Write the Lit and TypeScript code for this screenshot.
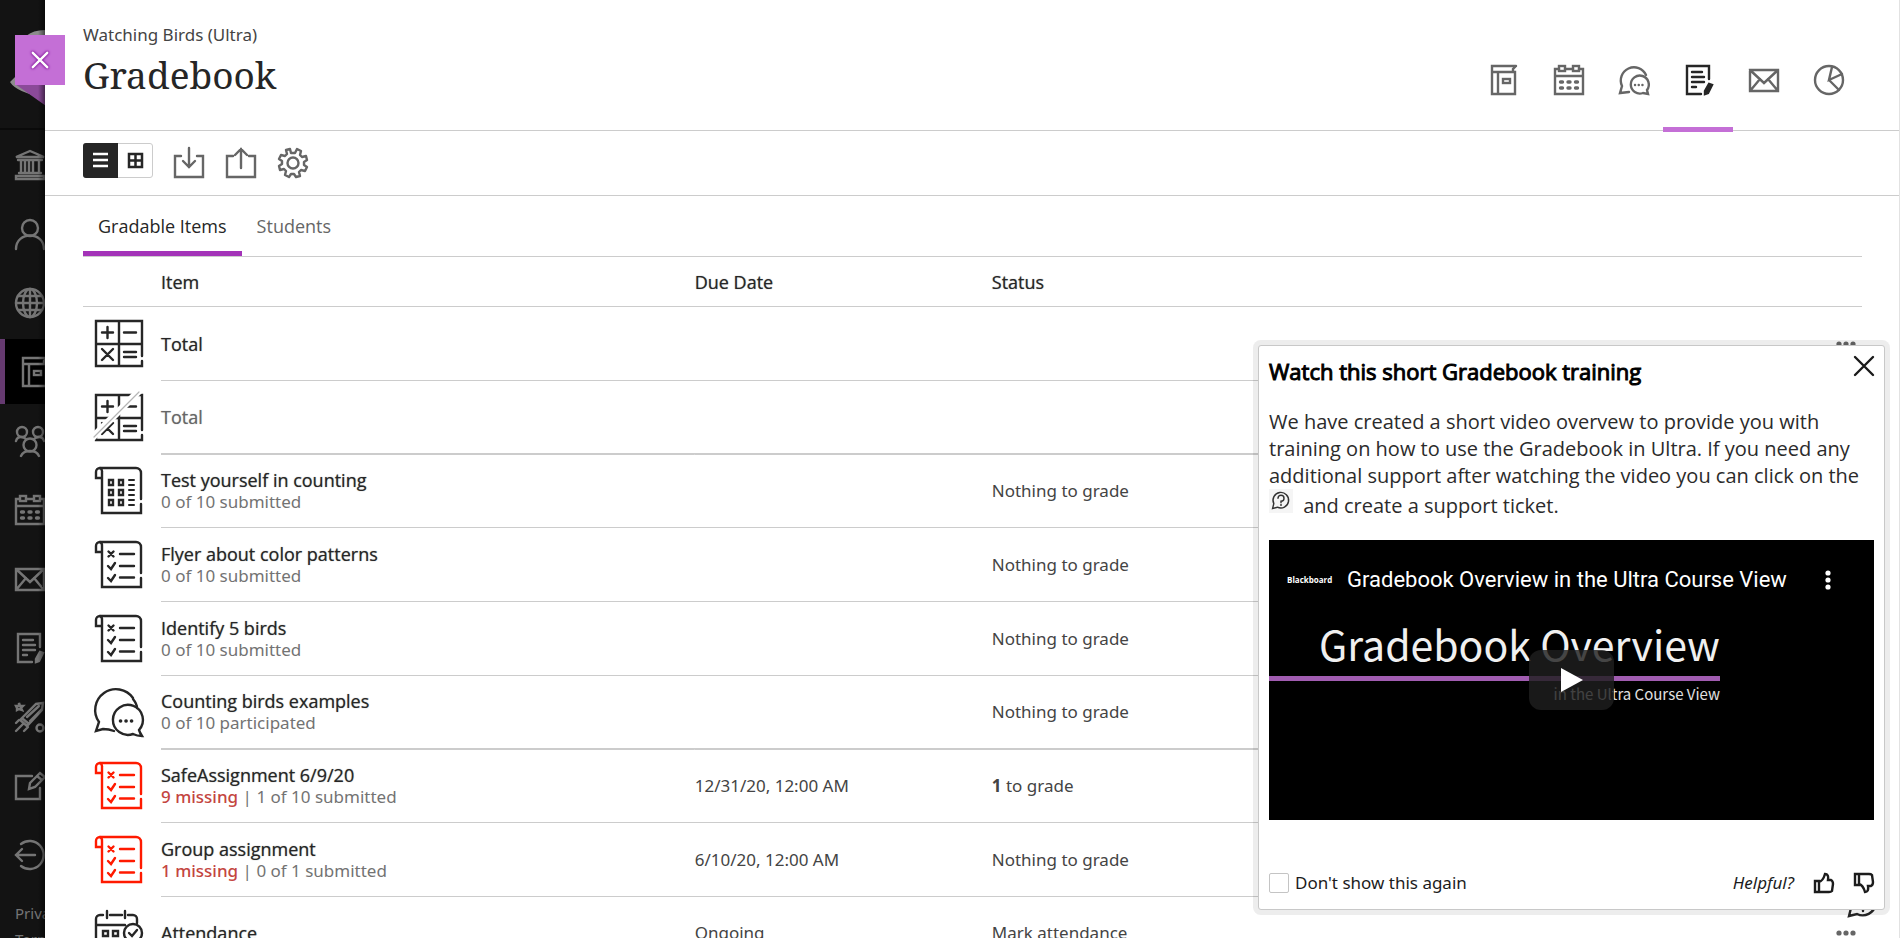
import { LitElement, html, css, svg, nothing, TemplateResult } from 'lit';
import { customElement, state } from 'lit/decorators.js';
import { classMap } from 'lit/directives/class-map.js';

const bookGlyph = svg`<path d="M27 1H3V29H26V7H3M9 7V29M27 1L24 4V6"/><rect x="14" y="14" width="7" height="4"/>`;
const calendarGlyph = svg`<path d="M5 4H1V29H29V4H25M11 4H19M1 11H29"/><rect x="5" y="1" width="6" height="5"/><rect x="19" y="1" width="6" height="5"/><path stroke-width="3.400" d="M6.500 17H8.500M14 17H16M21.500 17H23.500M6.500 23H8.500M14 23H16M21.500 23H23.500"/>`;
const chatGlyph = svg`<path d="M27 10A13 13 0 1 0 3 21L1 28L10 27"/><path d="M28 25A9 9 0 1 0 24 28L29 29Z"/><path stroke-width="2.400" d="M16 20H16.100M19.700 20H19.800M23.400 20H23.500"/>`;
const gradesGlyph = svg`<path d="M25 14V1H3V29H17"/><path d="M8 7H18M8 12H20M8 17H20M8 22H12"/><path fill="currentColor" d="M25 19L28 20L24 28L21 29V26Z"/>`;
const mailGlyph = svg`<path d="M1 5H29V26H1ZM1 5L15 18L29 5M1 26L11 14M29 26L19 14"/>`;
const pieGlyph = svg`<circle cx="15" cy="15" r="14"/><path d="M18 2L15 15L28 9M15 15L25 25"/>`;

const scrollFrame = svg`<path d="M6 11H1V5A4 4 0 0 1 5 1H41A5 5 0 0 1 46 6V32M46 37V46H7V5A4 4 0 0 0 5 1"/>`;

const glyphs: Record<string, [number, unknown]> = {
  book: [30, bookGlyph],
  calendar: [30, calendarGlyph],
  chat: [30, chatGlyph],
  grades: [30, gradesGlyph],
  mail: [30, mailGlyph],
  pie: [30, pieGlyph],
  bank: [30, svg`<path d="M1 7L15 1L29 7ZM3 10H27M1 26H29V29H1ZM4 23H26"/><path d="M6 11V22M10 11V22M14 11V22M18 11V22M24 11V22"/>`],
  person: [30, svg`<circle cx="15" cy="9" r="8"/><path d="M1 30C1 12 29 12 29 30"/>`],
  globe: [30, svg`<circle cx="15" cy="15" r="14"/><ellipse cx="15" cy="15" rx="7" ry="14"/><path d="M15 1V29M1 15H29M3 8H27M3 22H27"/>`],
  groups: [30, svg`<circle cx="7" cy="6" r="5"/><circle cx="23" cy="6" r="5"/><circle cx="15" cy="19" r="6.500"/><path d="M1 15Q2 11 6 11Q9 11 11 13M29 15Q28 11 24 11Q21 11 19 13M6 30Q8 25 15 25Q22 25 24 30"/>`],
  tools: [30, svg`<path d="M5 18L21 2L28 1L27 8L12 24ZM8 17L14 22M12 15L24 4M15 19L27 7M1 21L4 18M1 29L8 22M9 29L13 25"/><circle cx="25" cy="26" r="3.500"/><path d="M4 1L5 4L8 4L6 6L7 8L4 7L2 8L2 6L1 4L4 4Z"/>`],
  compose: [30, svg`<path d="M17 5H1V28H25V17"/><path d="M14 18L15 12L25 2L30 6L20 16ZM22 5L27 9"/>`],
  signout: [30, svg`<path d="M6 4A14 14 0 1 1 6 26M20 15H1M7 9L1 15L7 21"/>`],
  import: [30, svg`<path d="M7 8H1V29H29V8H23M15 0V18M9 13L15 19L21 13"/>`],
  export: [30, svg`<path d="M7 8H1V29H29V8H23M15 20V1M9 7L15 1L21 7"/>`],
  gear: [30, svg`<circle cx="15" cy="15" r="5.500"/><path stroke-linejoin="round" d="M12 1L13 5L17 5L19 1L23 3L22 7L24 9L28 8L29 12L26 14L26 17L29 19L27 23L23 22L21 24L22 28L18 29L16 26L13 26L11 29L7 27L8 23L6 21L2 22L1 18L4 16L4 13L1 11L3 7L7 8L9 6L8 2Z"/>`],
  list: [16, svg`<path stroke-linecap="butt" stroke-width="2.500" d="M0 2H15M0 8H15M0 14H15"/>`],
  grid: [16, svg`<path stroke-width="2.500" d="M2 2H15V15H2ZM8.500 2V15M2 8.500H15"/>`],
  cross: [20, svg`<path d="M1 1L19 19M19 1L1 19"/>`],
  calc: [48, svg`<path d="M47 36V1H1V46H47V41M24 1V46M1 24H47"/><path d="M7 12.500H18M12.500 7V18M29 12.500H41M7 29L18 40M18 29L7 40M29 32H41M29 37H41"/>`],
  calcOff: [48, svg`<path d="M47 36V1H1V46H47V41M24 1V46M1 24H47"/><path d="M7 12.500H18M12.500 7V18M29 12.500H41M7 29L18 40M18 29L7 40M29 32H41M29 37H41"/><path stroke="#fff" stroke-width="7" d="M-2 43L44 -3"/><path stroke="#b5b5b5" stroke-width="1.200" d="M-1 43L44 -2"/>`],
  quiz: [48, svg`${scrollFrame}<path d="M14 13H18V18H14ZM24 13H28V18H24ZM14 23H18V28H14ZM24 23H28V28H24ZM14 33H18V38H14ZM24 33H28V38H24Z"/><path stroke-width="2" d="M34 13H39M34 18H39M34 23H39M34 28H39M34 33H39M34 38H39"/>`],
  assignment: [48, svg`${scrollFrame}<path d="M13.500 10.500L18.500 15.500M18.500 10.500L13.500 15.500M13 25L16 28L20 22M13 37L16 40L20 34M25 13H39M25 25H39M25 36.500H39"/>`],
  discussion: [48, svg`<path d="M38 9A20.500 20.500 0 1 0 4 33L1 42L8 40Q14 40 19 42M38 10Q42 15 42 19"/><path d="M44 41A15 15 0 1 0 38 45Q42 47 47 47Q45 44 44 41"/><path stroke-width="3.600" d="M25.500 32H25.600M31 32H31.100M36.500 32H36.600"/>`],
  attendance: [48, svg`<path d="M8 5H5A4 4 0 0 0 1 9V47H42V40M15 5H27M33 5H38A4 4 0 0 1 42 9V13M12 1V8M30 1V8M1 15H30"/><path d="M8 21H13V26H8ZM18 21H23V26H18ZM8 32H13V37H8ZM18 32H23V37H18Z"/><circle cx="38" cy="23" r="9"/><path d="M34 23L37 26L42 20"/>`],
  dots: [20, svg`<g fill="currentColor" stroke="none"><circle cx="3" cy="10" r="2.600"/><circle cx="10" cy="10" r="2.600"/><circle cx="17" cy="10" r="2.600"/></g>`],
  kebab: [20, svg`<g fill="currentColor" stroke="none"><circle cx="10" cy="3" r="2.600"/><circle cx="10" cy="10" r="2.600"/><circle cx="10" cy="17" r="2.600"/></g>`],
  help: [30, svg`<path d="M3 21A13 13 0 1 1 9 27L1 29Z"/><path d="M10 12A5 5 0 1 1 15 17V19M15 22V24"/>`],
  thumbUp: [20, svg`<path d="M1 8H5V19H1ZM5 9Q9 8 11 1Q15 1 14 7H17Q19 8 19 11L18 18Q17 19 15 19H5"/>`],
  thumbDown: [20, svg`<path d="M1 12H5V1H1ZM5 11Q9 12 11 19Q15 19 14 13H17Q19 12 19 9L18 2Q17 1 15 1H5"/>`],
};

function icon(name: string, size = 30): TemplateResult {
  const [box, body] = glyphs[name];
  return html`<svg class="icon" width=${size} height=${size} viewBox="0 0 ${box} ${box}" fill="none"
    stroke="currentColor" stroke-width="2.400" stroke-linecap="round" aria-hidden="true">${body}</svg>`;
}

const shared = css`
  :host { display: block; font-family: "Noto Sans", "Open Sans", sans-serif; color: #262626; }
  *, *::before, *::after { box-sizing: border-box; }
  button { margin: 0; padding: 0; border: 0; background: none; font: inherit; color: inherit; cursor: pointer; }
  a { color: inherit; text-decoration: none; }
  svg { display: block; flex: none; overflow: visible; }
`;

@customElement('side-rail')
class SideRail extends LitElement {
  static styles = [shared, css`
    :host { background: #131313; color: #757575; overflow: hidden; position: relative; }
    .shade { position: absolute; top: 0; right: 0; bottom: 0; width: 7px; background: linear-gradient(90deg, transparent, rgba(0, 0, 0, .5)); }
    .brand { height: 130px; border-bottom: 2px solid #0a0a0a; }
    .nav { display: flex; flex-direction: column; gap: 4px; padding-top: 2px; }
    .link { height: 65px; display: flex; align-items: center; padding-left: 15px; }
    .link.active { background: #000; border-left: 5px solid #653a70; }
    .legal { display: flex; flex-direction: column; padding: 13px 0 0 15px; font-size: 15px; line-height: 26px; white-space: nowrap; }
  `];
  render() {
    const links: [string, string][] = [
      ['bank', 'Institution Page'], ['person', 'Profile'], ['globe', 'Activity Stream'], ['book', 'Courses'],
      ['groups', 'Organizations'], ['calendar', 'Calendar'], ['mail', 'Messages'], ['grades', 'Grades'],
      ['tools', 'Tools'], ['compose', 'Admin'], ['signout', 'Sign Out'],
    ];
    return html`
      <div class="brand">
        <svg width="60" height="128" viewBox="0 0 60 128" aria-hidden="true">
          <path fill="#8c8c8c" d="M26 36Q33 30 45 30H60V100Q18 95 10 82L16 76Z"/>
          <path fill="#8b4a99" d="M15 84H60V116Z"/>
        </svg>
      </div>
      <nav class="nav">
        ${links.map(([g, label]) => html`<a href="#" aria-label=${label} class=${classMap({ link: true, active: g === 'book' })}>${icon(g)}</a>`)}
      </nav>
      <div class="legal"><a href="#">Privacy</a><a href="#">Terms</a></div>
      <div class="shade"></div>`;
  }
}

interface Item { icon: string; title: string; missing?: number; detail?: string; due?: string; count?: number; status?: string; muted?: boolean; late?: boolean; }

const groups: Item[][] = [
  [{ icon: 'calc', title: 'Total' }, { icon: 'calcOff', title: 'Total', muted: true }],
  [
    { icon: 'quiz', title: 'Test yourself in counting', detail: '0 of 10 submitted', status: 'Nothing to grade' },
    { icon: 'assignment', title: 'Flyer about color patterns', detail: '0 of 10 submitted', status: 'Nothing to grade' },
    { icon: 'assignment', title: 'Identify 5 birds', detail: '0 of 10 submitted', status: 'Nothing to grade' },
    { icon: 'discussion', title: 'Counting birds examples', detail: '0 of 10 participated', status: 'Nothing to grade' },
  ],
  [
    { icon: 'assignment', title: 'SafeAssignment 6/9/20', missing: 9, detail: '1 of 10 submitted', due: '12/31/20, 12:00 AM', count: 1, status: 'to grade', late: true },
    { icon: 'assignment', title: 'Group assignment', missing: 1, detail: '0 of 1 submitted', due: '6/10/20, 12:00 AM', status: 'Nothing to grade', late: true },
    { icon: 'attendance', title: 'Attendance', due: 'Ongoing', status: 'Mark attendance' },
  ],
];

@customElement('item-table')
class ItemTable extends LitElement {
  static styles = [shared, css`
    table { width: 100%; border-collapse: separate; border-spacing: 0; table-layout: fixed; font-size: 17px; line-height: 22px; }
    .c-icon { width: 78px; }
    .c-item { width: 30%; }
    .c-due { width: 16.7%; }
    .c-menu { width: 60px; }
    th, .title { font-family: "Open Sans", sans-serif; font-size: 18px; font-weight: 400; text-shadow: 0 0 1px rgba(38, 38, 38, .6); color: #262626; }
    th { height: 50px; padding: 0; text-align: left; border-bottom: 1px solid #ccc; }
    td { height: 74px; padding: 0; vertical-align: middle; border-bottom: 1px solid #ccc; color: #444; }
    td.pic { border-bottom: 0; padding-left: 12px; color: #262626; }
    tr:last-child td { height: 73px; }
    tbody + tbody tr:first-child td:not(.pic) { background: linear-gradient(#ccc, #ccc) top / 100% 1px no-repeat; }
    .late { color: #ff1a00; }
    .title.muted { color: #666; text-shadow: 0 0 1px rgba(102, 102, 102, .6); }
    .detail { color: #737373; }
    .missing { font-weight: 500; color: #c4453f; }
    .menu { text-align: right; }
    .more { padding: 8px 6px; color: #666; }
  `];
  render() {
    return html`<table>
      <colgroup><col class="c-icon"><col class="c-item"><col class="c-due"><col><col class="c-menu"></colgroup>
      <thead><tr><th></th><th scope="col">Item</th><th scope="col">Due Date</th><th scope="col">Status</th><th></th></tr></thead>
      ${groups.map(g => html`<tbody>${g.map(i => html`<tr>
        <td class="pic"><span class=${classMap({ late: !!i.late })}>${icon(i.icon, 48)}</span></td>
        <td>
          <div class=${classMap({ title: true, muted: !!i.muted })}>${i.title}</div>
          ${i.detail ? html`<div class="detail">${i.missing ? html`<span class="missing">${i.missing} missing</span> | ` : nothing}${i.detail}</div>` : nothing}
        </td>
        <td>${i.due ?? nothing}</td>
        <td>${i.count ? html`<b>${i.count}</b> ` : nothing}${i.status ?? nothing}</td>
        <td class="menu"><button class="more" aria-label="More options for ${i.title}">${icon('dots', 20)}</button></td>
      </tr>`)}</tbody>`)}
    </table>`;
  }
}

@customElement('training-popover')
class TrainingPopover extends LitElement {
  static styles = [shared, css`
    :host { background: #fff; border: 1px solid #c8c8c8; border-radius: 3px; box-shadow: 0 0 0 5px rgba(0, 0, 0, .07); padding: 10px 10px 12px; color: #000; font-family: "Open Sans", sans-serif; }
    .head { display: flex; justify-content: space-between; align-items: flex-start; }
    h2 { margin: 0; font-size: 22px; line-height: 30px; font-weight: 400; -webkit-text-stroke: 1px #000; }
    .close { color: #1a1a1a; }
    .copy { margin: 22px 0 0; font-size: 20px; line-height: 27px; color: #2b2b2b; }
    .helpicon { display: inline-block; background: #f5f5f5; width: 24px; height: 24px; padding: 2px 3px; margin-right: 5px; color: #333; }
    .video { position: relative; margin-top: 21px; height: 280px; background: #000; color: #fff; overflow: hidden; }
    .bar { display: flex; align-items: center; padding: 26px 36px 0 18px; gap: 16px; font-family: Roboto, sans-serif; font-size: 22px; line-height: 28px; color: #fff; }
    .logo { font-family: "Open Sans", sans-serif; font-size: 8px; font-weight: 700; width: 44px; white-space: nowrap; }
    .name { flex: 1; white-space: nowrap; }
    .slide { width: 451px; text-align: right; font-family: "Noto Sans CJK SC", sans-serif; color: #f0f0f0; }
    .big { font-size: 41px; line-height: 60px; padding: 19px 0 3px; border-bottom: 5px solid #a05cb0; }
    .small { font-size: 15px; line-height: 26px; color: #e0e0e0; }
    .play { position: absolute; left: 260px; top: 110px; width: 85px; height: 60px; border-radius: 12px; background: rgba(30, 30, 30, .82); display: flex; align-items: center; justify-content: center; }
    .foot { display: flex; align-items: center; margin-top: 49px; font-family: "Noto Sans", sans-serif; font-size: 17px; line-height: 28px; color: #1c1c1c; }
    .check { display: flex; align-items: center; gap: 6px; flex: 1; }
    .check input { appearance: none; margin: 0; width: 20px; height: 20px; border: 1px solid #c4c4c4; border-radius: 2px; background: #fff; }
    .vote { margin-left: 20px; }
  `];
  render() {
    return html`
      <div class="head"><h2>Watch this short Gradebook training</h2><button class="close" aria-label="Close">${icon('cross', 20)}</button></div>
      <p class="copy">We have created a short video overvew to provide you with training on how to use the Gradebook in Ultra. If you need any additional support after watching the video you can click on the <span class="helpicon">${icon('help', 18)}</span> and create a support ticket.</p>
      <div class="video">
        <div class="bar"><span class="logo">Blackboard</span><span class="name">Gradebook Overview in the Ultra Course View</span>${icon('kebab', 20)}</div>
        <div class="slide"><div class="big">Gradebook Overview</div><div class="small">in the Ultra Course View</div></div>
        <button class="play" aria-label="Play"><svg width="22" height="24" viewBox="0 0 22 24"><path fill="#fff" d="M0 0L22 12L0 24Z"/></svg></button>
      </div>
      <div class="foot">
        <label class="check"><input type="checkbox">Don't show this again</label>
        <em>Helpful?</em>
        <button class="vote" aria-label="Helpful">${icon('thumbUp', 20)}</button>
        <button class="vote" aria-label="Not helpful">${icon('thumbDown', 20)}</button>
      </div>`;
  }
}

@customElement('app-root')
class AppRoot extends LitElement {
  @state() tab = 0;
  static styles = [shared, css`
    :host { display: flex; height: 100vh; overflow: hidden; position: relative; background: #fff; }
    side-rail { width: 45px; flex: none; }
    .close { position: absolute; left: 15px; top: 35px; width: 50px; height: 50px; background: #c46fd6; color: #fff; display: flex; align-items: center; justify-content: center; }
    .close svg { stroke-width: 3; filter: drop-shadow(0 0 1px #8a1fa0) drop-shadow(0 0 1px #8a1fa0); }
    .panel { flex: 1; min-width: 0; border-right: 1px solid #e2e2e2; }
    .header { display: flex; justify-content: space-between; height: 131px; padding: 0 38px; border-bottom: 1px solid #ccc; }
    .course { margin: 22px 0 0; font-size: 17px; line-height: 26px; color: #444; }
    h1 { margin: 0; font: 400 37px/54px "Noto Serif", serif; color: #262626; }
    .nav { display: flex; color: #666; }
    .nav a { width: 65px; height: 130px; padding-top: 30px; display: flex; align-items: center; justify-content: center; position: relative; }
    .nav a.on { color: #262626; }
    .nav a.on::after { content: ""; position: absolute; left: -3px; right: -2px; bottom: -2px; height: 5px; background: #c46fd6; }
    .tools { display: flex; align-items: center; height: 65px; padding: 0 38px 2px; border-bottom: 1px solid #ccc; color: #666; }
    .seg { display: flex; margin: 0 21px 4px 0; height: 35px; border: 1px solid #ccc; border-radius: 3px; }
    .seg button { width: 35px; height: 35px; margin: -1px 0 0 -1px; display: flex; align-items: center; justify-content: center; color: #262626; }
    .seg .on { background: #262626; color: #fff; border-radius: 3px 0 0 3px; }
    .tool { margin: 2px 22px 0 0; }
    .content { padding: 0 37px 0 38px; }
    .tabs { display: flex; height: 61px; border-bottom: 1px solid #ccc; font: 400 18px/24px "Open Sans", sans-serif; text-shadow: 0 0 1px rgba(38, 38, 38, .6); }
    .tab { padding: 5px 15px 0; color: #666; border-bottom: 5px solid transparent; }
    .tab.on { color: #262626; border-color: #a333b8; }
    .support { position: absolute; right: 22px; bottom: 21px; color: #262626; }
    training-popover { position: absolute; right: 15px; bottom: 28px; width: 627px; }
  `];
  render() {
    const nav: [string, string][] = [['book', 'Course Content'], ['calendar', 'Calendar'], ['chat', 'Discussions'], ['grades', 'Gradebook'], ['mail', 'Messages'], ['pie', 'Analytics']];
    return html`
      <side-rail></side-rail>
      <main class="panel">
        <header class="header">
          <div><p class="course">Watching Birds (Ultra)</p><h1>Gradebook</h1></div>
          <nav class="nav">${nav.map(([g, l]) => html`<a href="#" aria-label=${l} class=${classMap({ on: g === 'grades' })}>${icon(g)}</a>`)}</nav>
        </header>
        <div class="tools">
          <div class="seg"><button class="on" aria-label="List view">${icon('list', 16)}</button><button aria-label="Grid view">${icon('grid', 16)}</button></div>
          <button class="tool" aria-label="Upload">${icon('import')}</button>
          <button class="tool" aria-label="Download">${icon('export')}</button>
          <button class="tool" aria-label="Settings">${icon('gear')}</button>
        </div>
        <div class="content">
          <div class="tabs" role="tablist">
            ${['Gradable Items', 'Students'].map((t, i) => html`<button role="tab" class=${classMap({ tab: true, on: this.tab === i })} @click=${() => { this.tab = i; }}>${t}</button>`)}
          </div>
          <item-table></item-table>
        </div>
      </main>
      <button class="close" aria-label="Close Gradebook">${icon('cross', 16)}</button>
      <button class="support" aria-label="Support">${icon('help', 30)}</button>
      <training-popover></training-popover>`;
  }
}
